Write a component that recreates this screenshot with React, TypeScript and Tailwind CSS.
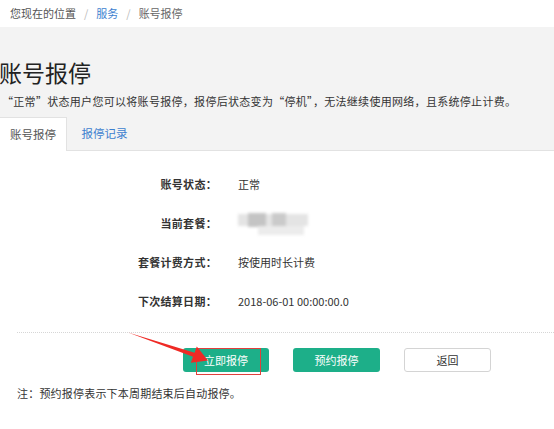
import React from 'react';

const rows = [
  { label: '账号状态：', value: '正常' },
  { label: '当前套餐：', value: null },
  { label: '套餐计费方式：', value: '按使用时长计费' },
  { label: '下次结算日期：', value: '2018-06-01 00:00:00.0' },
];

function BlurredValue() {
  // masked plan name in the screenshot
  return (
    <div className="relative w-[72px] h-[24px] blur-[1.5px]">
      <div className="absolute left-0 top-[2px] w-[70px] h-[12px] bg-[#e4e4e4]" />
      <div className="absolute left-[10px] top-[1px] w-[18px] h-[14px] bg-[#c4c4c4]" />
      <div className="absolute left-[34px] top-[1px] w-[14px] h-[14px] bg-[#cacaca]" />
      <div className="absolute left-[20px] top-[14px] w-[46px] h-[9px] bg-[#ececec]" />
    </div>
  );
}

export default function App() {
  return (
    <div
      className="relative w-[554px] h-[429px] overflow-hidden bg-white text-[#333] text-[11px]"
      style={{ fontFamily: '"Noto Sans CJK SC", "Noto Sans", sans-serif' }}
    >
      {/* Breadcrumb */}
      <div className="h-[27px] flex items-center pl-[10px] text-[11px] text-[#555]">
        <span>您现在的位置</span>
        <span className="mx-[8px] text-[#bbb]">/</span>
        <span className="text-[#3d7fcf]">服务</span>
        <span className="mx-[8px] text-[#bbb]">/</span>
        <span className="text-[#666]">账号报停</span>
      </div>

      {/* Header band */}
      <div className="bg-[#f3f3f3] border-b border-[#e2e2e2] pt-[30px]">
        <h1 className="ml-[-1px] text-[23px] leading-[30px] text-[#222] font-normal">账号报停</h1>
        <p className="mt-[6px] pl-[2px] leading-[16px] tracking-[0.3px] text-[#333] whitespace-nowrap">
          “正常”状态用户您可以将账号报停，报停后状态变为“停机”，无法继续使用网络，且系统停止计费。
        </p>
        <div className="mt-[8px] flex h-[33px]">
          <div className="w-[67px] h-[34px] mb-[-1px] bg-white border-t border-r border-[#e2e2e2] flex items-center justify-center text-[#555] text-[11.5px]">
            账号报停
          </div>
          <div className="w-[75px] flex items-center justify-center text-[#3d7fcf] text-[11.5px]">
            报停记录
          </div>
        </div>
      </div>

      {/* Details */}
      <div className="pt-[14px]">
        {rows.map((r) => (
          <div key={r.label} className="h-[39px] flex items-center">
            <div className="w-[217px] text-right font-semibold tracking-[0.3px] text-[#333]">{r.label}</div>
            <div className="ml-[21px] text-[#333]">
              {r.value === null ? <BlurredValue /> : r.value}
            </div>
          </div>
        ))}
      </div>

      <div className="mt-[11px] ml-[17px] border-t border-dotted border-[#d6d6d6]" />

      {/* Actions */}
      <div className="mt-[15px] flex pl-[183px] gap-[24px]">
        <button className="w-[86px] h-[24px] rounded-[3px] bg-[#1daf89] text-white text-[11px]">立即报停</button>
        <button className="w-[87px] h-[24px] rounded-[3px] bg-[#1daf89] text-white text-[11px]">预约报停</button>
        <button className="w-[87px] h-[24px] rounded-[3px] bg-white border border-[#d4d4d4] text-[#333] text-[11px]">返回</button>
      </div>

      <p className="mt-[13px] pl-[17px] leading-[16px] tracking-[0.2px] text-[#333]">注：预约报停表示下本周期结束后自动报停。</p>

      {/* Annotation overlay: red box + arrow */}
      <div className="absolute left-[196px] top-[348px] w-[65px] h-[27px] border border-[#e0403c]" />
      <svg className="absolute left-0 top-0 pointer-events-none" width="554" height="429" viewBox="0 0 554 429">
        <polygon
          points="128,332.5 194.6,352.8 196.8,346.5 208,360.5 190.8,362.8 193,356.8"
          fill="#ef2a25"
        />
      </svg>
    </div>
  );
}
